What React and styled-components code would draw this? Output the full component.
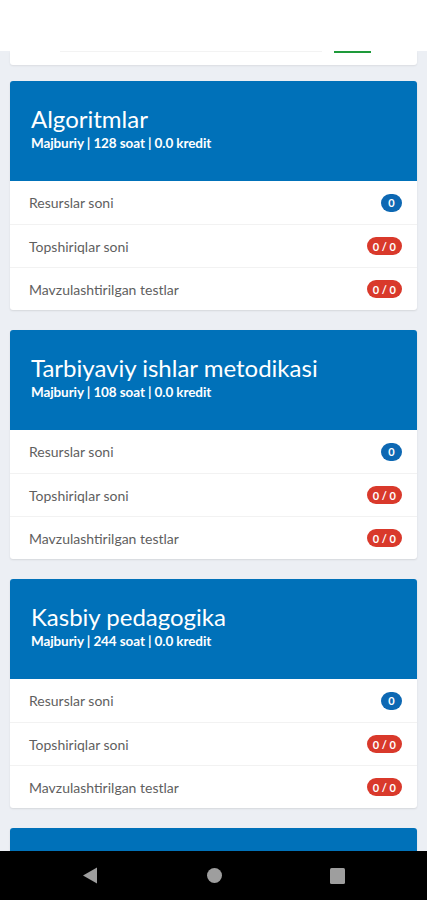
import styled, { createGlobalStyle } from "styled-components";

const GlobalStyle = createGlobalStyle`
  html, body {
    margin: 0;
    padding: 0;
    background: #eceff4;
  }
  * { box-sizing: border-box; }
`;

const subjects = [
  { name: "Algoritmlar", hours: 128 },
  { name: "Tarbiyaviy ishlar metodikasi", hours: 108 },
  { name: "Kasbiy pedagogika", hours: 244 },
];

const rows = [
  { label: "Resurslar soni", value: "0", tone: "blue" },
  { label: "Topshiriqlar soni", value: "0 / 0", tone: "red" },
  { label: "Mavzulashtirilgan testlar", value: "0 / 0", tone: "red" },
];

function App() {
  return (
    <Screen>
      <GlobalStyle />
      <TopBar />
      <Main>
        <Stub>
          <TabLine />
          <TabActive />
        </Stub>
        {subjects.map((s) => (
          <Card key={s.name}>
            <Header>
              <Title>{s.name}</Title>
              <Meta>Majburiy | {s.hours} soat | 0.0 kredit</Meta>
            </Header>
            {rows.map((r) => (
              <Row key={r.label}>
                <Label>{r.label}</Label>
                <Badge $tone={r.tone}>{r.value}</Badge>
              </Row>
            ))}
          </Card>
        ))}
        <Card>
          <Header />
        </Card>
      </Main>
      <NavBar>
        <svg width="16" height="17" viewBox="0 0 16 17">
          <path d="M15 0.5 L15 16.5 L1 8.5 Z" fill="#9e9e9e" />
        </svg>
        <svg width="15" height="15" viewBox="0 0 15 15">
          <circle cx="7.5" cy="7.5" r="7.5" fill="#9e9e9e" />
        </svg>
        <svg width="15" height="16" viewBox="0 0 15 16">
          <rect x="0" y="0" width="15" height="16" rx="1.5" fill="#9e9e9e" />
        </svg>
      </NavBar>
    </Screen>
  );
}

const Screen = styled.div`
  width: 427px;
  height: 900px;
  display: flex;
  flex-direction: column;
  overflow: hidden;
  background: #eceff4;
  font-family: Lato, "Open Sans", sans-serif;
`;

const TopBar = styled.div`
  height: 51px;
  flex: none;
  background: #ffffff;
`;

const Main = styled.div`
  flex: 1;
  overflow: hidden;
  display: flex;
  flex-direction: column;
  gap: 20px;
  padding: 0 10px;
`;

const Stub = styled.div`
  height: 14px;
  flex: none;
  margin-bottom: -4px;
  background: #ffffff;
  border-radius: 0 0 3px 3px;
  box-shadow: 0 1px 2px rgba(0, 0, 0, 0.08);
  display: flex;
  align-items: flex-start;
  padding-left: 50px;
`;

const TabLine = styled.div`
  width: 262px;
  height: 1px;
  background: #f3f3f3;
`;

const TabActive = styled.div`
  width: 37px;
  height: 2px;
  margin-left: 12px;
  background: #1e9a3a;
`;

const Card = styled.div`
  flex: none;
  background: #ffffff;
  border-radius: 3px;
  overflow: hidden;
  box-shadow: 0 1px 2px rgba(0, 0, 0, 0.1);
`;

const Header = styled.div`
  height: 100px;
  background: #0071b9;
  color: #ffffff;
  padding: 22px 21px 0;
`;

const Title = styled.div`
  font-size: 24px;
  font-weight: 400;
  line-height: 32px;
  letter-spacing: 0;
`;

const Meta = styled.div`
  font-size: 13.5px;
  font-weight: 700;
  line-height: 17px;
  letter-spacing: -0.1px;
`;

const Row = styled.div`
  height: 43px;
  display: flex;
  align-items: center;
  justify-content: space-between;
  padding: 0 15px 0 19px;
  & + & {
    border-top: 1px solid #f2f2f2;
  }
`;

const Label = styled.span`
  font-size: 14px;
  color: #5f5f5f;
  letter-spacing: 0;
`;

const Badge = styled.span`
  min-width: 21px;
  height: 18px;
  padding: 0 6px;
  border-radius: 9px;
  display: inline-flex;
  align-items: center;
  justify-content: center;
  font-size: 11px;
  font-weight: 700;
  color: #ffffff;
  background: ${(p) => (p.$tone === "red" ? "#d9392b" : "#0d68b3")};
`;

const NavBar = styled.div`
  height: 49px;
  flex: none;
  background: #000000;
  display: flex;
  align-items: center;
  justify-content: space-between;
  padding: 0 82px 0 82px;
`;

export default App;
